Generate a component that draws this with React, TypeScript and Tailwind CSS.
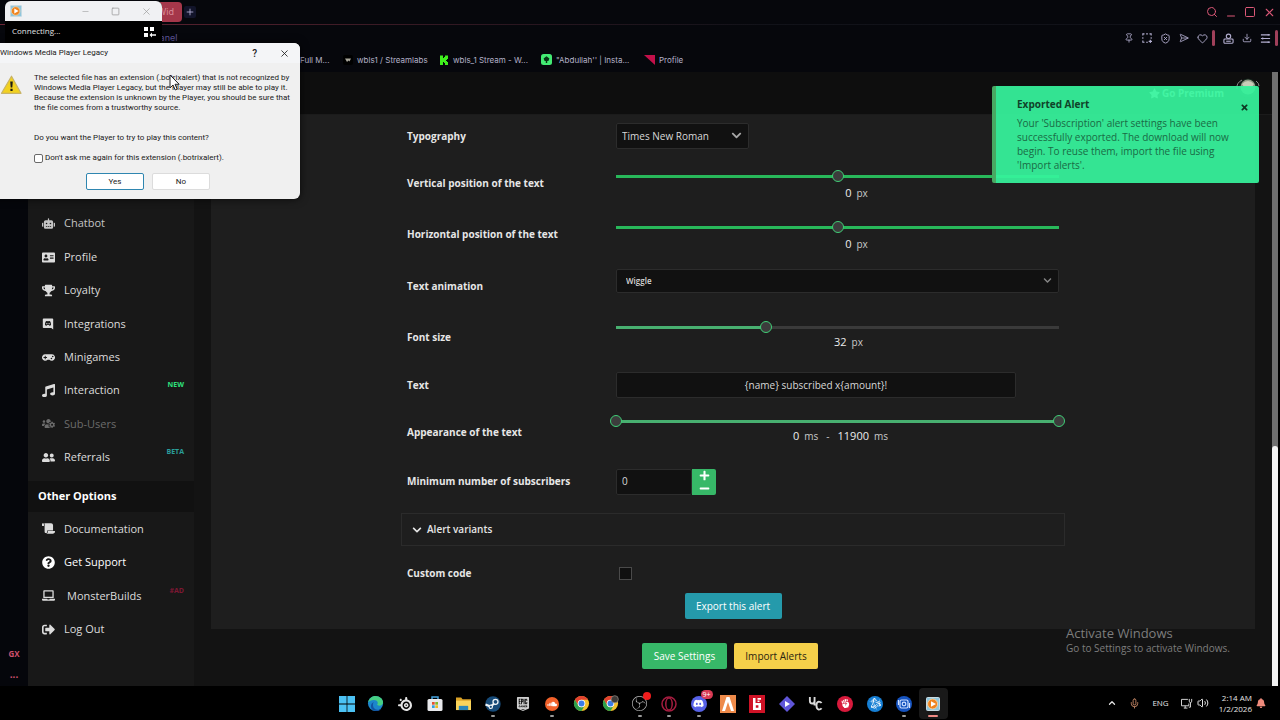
import type { ReactNode } from "react";
import {
  FaRobot, FaAddressCard, FaTrophy, FaGamepad, FaMusic, FaUsersCog, FaUserFriends, FaScroll,
  FaQuestionCircle, FaLaptop, FaSignOutAlt, FaStar, FaSteam, FaSoundcloud, FaDiscord, FaBell,
  FaPlus, FaMinus, FaFistRaised, FaBattleNet, FaTimes, FaChevronDown,
} from "react-icons/fa";
import { SiSteelseries, SiEpicgames, SiObsstudio } from "react-icons/si";
import {
  Search, Minus, Square, X, Pin, ShieldX, SendHorizontal, Heart, Download,
  ChevronUp, Mic, Volume2, Plus,
} from "lucide-react";

const ui = "font-['Open_Sans','Noto_Sans',sans-serif]";

function DiscordTile() {
  return (
    <svg viewBox="0 0 14 15" className="h-3 w-3" fill="currentColor" aria-hidden="true">
      <path
        fillRule="evenodd"
        d="M1.5 0.5h11a1 1 0 0 1 1 1V14.5l-2.4-2H1.5a1 1 0 0 1-1-1v-10a1 1 0 0 1 1-1zM4.4 4.2C3.6 5.3 3.2 6.8 3.2 8.6c.6.7 1.3 1 2.1 1l.5-.8h2.4l.5.8c.8 0 1.5-.3 2.1-1 0-1.8-.4-3.3-1.2-4.4-.6-.4-1.2-.5-1.7-.5l-.3.4H6.4l-.3-.4c-.5 0-1.1.1-1.7.5zM5.6 6.3a.8.8 0 1 1 0 1.6.8.8 0 0 1 0-1.6zm2.8 0a.8.8 0 1 1 0 1.6.8.8 0 0 1 0-1.6z"
      />
    </svg>
  );
}

type NavItem = { label: string; icon: ReactNode; badge?: string; badgeClass?: string; tone?: string };

const mainNav: NavItem[] = [
  { label: "Chatbot", icon: <FaRobot />, tone: "text-[#c4c4c4]" },
  { label: "Profile", icon: <FaAddressCard /> },
  { label: "Loyalty", icon: <FaTrophy /> },
  { label: "Integrations", icon: <DiscordTile /> },
  { label: "Minigames", icon: <FaGamepad /> },
  { label: "Interaction", icon: <FaMusic />, badge: "NEW", badgeClass: "text-[#2fe07c]" },
  { label: "Sub-Users", icon: <FaUsersCog />, tone: "text-[#6c6c6c]" },
  { label: "Referrals", icon: <FaUserFriends />, badge: "BETA", badgeClass: "text-[#2a9d9a]" },
];

const otherNav: NavItem[] = [
  { label: "Documentation", icon: <FaScroll /> },
  { label: "Get Support", icon: <FaQuestionCircle />, tone: "text-white" },
  { label: "MonsterBuilds", icon: <FaLaptop />, badge: "#AD", badgeClass: "text-[#7c1733]" },
  { label: "Log Out", icon: <FaSignOutAlt /> },
];

function NavList({ items }: { items: NavItem[] }) {
  return (
    <>
      {items.map((item) => (
        <li key={item.label} className="flex flex-1">
          <a href="#" className={`flex flex-1 items-center pl-3 pr-2.5 text-[11px] ${item.tone ?? "text-[#dcdcdc]"}`}>
            <span className="flex w-4 justify-center text-[13px]">{item.icon}</span>
            <span className={item.label === "MonsterBuilds" ? "ml-[11px]" : "ml-2"}>{item.label}</span>
            {item.badge && (
              <span className={`mb-2.5 ml-auto text-[7px] font-bold ${item.badgeClass}`}>{item.badge}</span>
            )}
          </a>
        </li>
      ))}
    </>
  );
}

function BrowserChrome() {
  return (
    <header className="flex flex-col bg-[#06070c] font-['Inter',sans-serif]">
      <div className="flex h-6 items-center pl-[120px] pr-1">
        <div className="flex h-5 w-[62px] items-center justify-end rounded-sm bg-[#a5374a] px-2 text-[9px] text-[#d98a97]">Wid</div>
        <button aria-label="New tab" className="ml-0.5 flex size-3 items-center justify-center rounded-xs bg-[#12142a] text-[#b9b4dc]">
          <Plus size={10} />
        </button>
        <div className="ml-auto flex items-center gap-[7px] text-[#dc5877]">
          <button aria-label="Search"><Search size={12} /></button>
          <button aria-label="Minimize"><Minus size={12} className="translate-y-1" /></button>
          <button aria-label="Maximize"><Square size={12} /></button>
          <button aria-label="Close window"><X size={13} /></button>
        </div>
      </div>
      <div className="h-px bg-linear-to-r from-[#6b2434] via-[#2a1620] via-40% to-[#111219] to-60%" />
      <div className="flex h-[26px] items-center pl-[154px] pr-0.5 text-[#b3aed0]">
        <span className="text-[9px] text-[#6259a0]">panel</span>
        <div className="ml-auto flex items-center gap-2">
          <button aria-label="Pin"><Pin size={10} /></button>
          <button aria-label="Snapshot">
            <svg viewBox="0 0 12 12" className="size-2.5" fill="none" stroke="currentColor" strokeWidth="1.300">
              <path d="M1 3V1h2M5 1h2M9 1h2v2M11 5v2M1 5v2M1 9v2h2M5 11h2M8 10h4M10 8v4" />
            </svg>
          </button>
          <button aria-label="Ad blocker"><ShieldX size={11} /></button>
          <button aria-label="Send"><SendHorizontal size={10} /></button>
          <button aria-label="Favourite"><Heart size={11} /></button>
          <span className="-mx-1 h-4 w-[3px] rounded-full bg-[#a0405a]" />
          <button aria-label="Account" className="ml-1">
            <svg viewBox="0 0 12 12" className="size-[11px]" fill="none" stroke="currentColor" strokeWidth="1.200">
              <circle cx="6" cy="3.600" r="2.400" />
              <rect x="1" y="6.600" width="10" height="4.600" rx="1" />
              <path d="M3.500 9h5" />
            </svg>
          </button>
          <button aria-label="Downloads"><Download size={10} /></button>
          <button aria-label="Easy setup">
            <svg viewBox="0 0 12 12" className="size-[11px]" fill="none" stroke="currentColor" strokeWidth="1.200">
              <path d="M1 2h10M1 6h10M1 10h10M9 1v2M3 5v2M9 9v2" />
            </svg>
          </button>
          <span className="-ml-1 h-4 w-[3px] rounded-full bg-[#a0405a]" />
        </div>
      </div>
      <nav className="flex h-[21px] items-center pb-1 pl-[300px] text-[8px] text-[#b4b2c8]">
        <a href="#" className="w-[43px]">Full M...</a>
        <a href="#" className="flex w-[96px] items-center gap-1">
          <svg viewBox="0 0 10 10" className="size-2.5">
            <rect width="10" height="10" rx="2" fill="#000" />
            <path d="M2 3.500h6L6.500 6.500 5.500 5.500 4 7z" fill="#a9a79c" />
          </svg>
          wbls1 / Streamlabs
        </a>
        <a href="#" className="flex w-[102px] items-center gap-1">
          <svg viewBox="0 0 10 10" className="size-2.5">
            <path d="M1 0.500h3v2.500h1V2h1V0.500h3V4H8v1H7v1h1v1h1v3H6V8H5V7H4v3H1z" fill="#3fef1d" />
          </svg>
          wbls_1 Stream - W...
        </a>
        <a href="#" className="flex w-[103px] items-center gap-1">
          <svg viewBox="0 0 11 11" className="size-[11px]">
            <rect width="11" height="11" rx="2.500" fill="#43ea73" />
            <path d="M5.500 2.200L8.400 4.600 7.400 7H6.200v2H4.800V7H3.600L2.600 4.600z" fill="#073215" />
          </svg>
          "Abdullah'' | Insta...
        </a>
        <a href="#" className="flex items-center gap-1">
          <svg viewBox="0 0 11 11" className="size-[11px]"><path d="M0 1h11v10z" fill="#c3104a" /></svg>
          Profile
        </a>
      </nav>
    </header>
  );
}

const thumb =
  "[&::-webkit-slider-thumb]:appearance-none [&::-webkit-slider-thumb]:size-3 [&::-webkit-slider-thumb]:rounded-full [&::-webkit-slider-thumb]:border [&::-webkit-slider-thumb]:border-solid [&::-webkit-slider-thumb]:border-[#3fcf76] [&::-webkit-slider-thumb]:bg-[#3c3c3c]";
const range =
  "m-0 block h-3.5 w-full cursor-pointer appearance-none bg-transparent bg-[length:100%_3px] bg-center bg-no-repeat";

function Row({ label, htmlFor, height, children }: { label: string; htmlFor: string; height: string; children: ReactNode }) {
  return (
    <div className={`flex px-1.5 ${height}`}>
      <label htmlFor={htmlFor} className="flex w-[209px] shrink-0 items-center text-[10px] font-bold text-[#e6e6e6]">{label}</label>
      <div className="flex min-w-0 flex-1 flex-col">{children}</div>
    </div>
  );
}

function Unit({ value, unit }: { value: string; unit: string }) {
  return (
    <span className="flex items-baseline gap-[5px]">
      <span className="text-[11px] text-[#ececec]">{value}</span>
      <span className="text-[10px] text-[#c9c9c9]">{unit}</span>
    </span>
  );
}

function AlertForm() {
  const value = "flex items-center justify-center";
  const field = "rounded-xs border border-[#2c2c2c] bg-[#111111] text-[#d8d8d8]";
  const chevron = "pointer-events-none absolute right-[7px] top-[7px]";
  return (
    <form className="mx-auto w-full max-w-[664px]">
      <Row label="Typography" htmlFor="typography" height="h-[43px]">
        <div className="relative mt-2 w-[133px]">
          <select id="typography" className={`block h-[26px] w-full appearance-none pl-[5px] text-[10px] ${field}`}>
            <option>Times New Roman</option>
          </select>
          <FaChevronDown size={11} className={`${chevron} text-[#a8a8a8]`} />
        </div>
      </Row>
      <Row label="Vertical position of the text" htmlFor="vertical" height="h-[51px]">
        <input id="vertical" type="range" min="-100" max="100" defaultValue="0" className={`mt-[11px] bg-linear-to-r from-[#28b85a] to-[#28b85a] ${range} ${thumb}`} />
        <div className={`h-5 pl-[38px] ${value}`}><Unit value="0" unit="px" /></div>
      </Row>
      <Row label="Horizontal position of the text" htmlFor="horizontal" height="h-[51px]">
        <input id="horizontal" type="range" min="-100" max="100" defaultValue="0" className={`mt-[11px] bg-linear-to-r from-[#28b85a] to-[#28b85a] ${range} ${thumb}`} />
        <div className={`h-5 pl-[38px] ${value}`}><Unit value="0" unit="px" /></div>
      </Row>
      <Row label="Text animation" htmlFor="animation" height="h-[52px]">
        <div className="relative mt-[9px]">
          <select id="animation" className={`block h-6 w-full appearance-none pl-[9px] text-[8px] font-semibold ${field}`}>
            <option>Wiggle</option>
          </select>
          <FaChevronDown size={9} className={`${chevron} text-[#858585]`} />
        </div>
      </Row>
      <Row label="Font size" htmlFor="font-size" height="h-[51px]">
        <input id="font-size" type="range" min="0" max="96" defaultValue="32" className={`mt-2 bg-linear-to-r from-[#48b070] from-34% to-[#3a3a3a] to-34% ${range} ${thumb}`} />
        <div className={`h-4 pl-[22px] ${value}`}><Unit value="32" unit="px" /></div>
      </Row>
      <Row label="Text" htmlFor="alert-text" height="h-11">
        <input id="alert-text" type="text" defaultValue="{name} subscribed x{amount}!" className={`my-auto h-[26px] w-[400px] text-center text-[10px] ${field}`} />
      </Row>
      <Row label="Appearance of the text" htmlFor="appear-from" height="h-[50px]">
        <div className="-mx-1.5 mt-[7px] grid bg-linear-to-r from-[#48b070] to-[#48b070] bg-[length:440px_3px] bg-center bg-no-repeat">
          <input id="appear-from" type="range" min="0" max="11900" defaultValue="0" className={`col-start-1 row-start-1 ${range} ${thumb}`} />
          <input aria-label="Appearance end" type="range" min="0" max="11900" defaultValue="11900" className={`col-start-1 row-start-1 ${range} ${thumb}`} />
        </div>
        <div className={`h-4 gap-2 pl-1.5 ${value}`}>
          <Unit value="0" unit="ms" />
          <span className="text-[10px] text-[#c9c9c9]">-</span>
          <Unit value="11900" unit="ms" />
        </div>
      </Row>
      <Row label="Minimum number of subscribers" htmlFor="min-subs" height="h-[49px]">
        <div className="my-auto flex h-[26px]">
          <input id="min-subs" type="text" defaultValue="0" className={`w-[76px] pl-[5px] text-[10px] ${field}`} />
          <div className="flex w-6 flex-col rounded-r-xs bg-[#37b868] text-white">
            <button type="button" aria-label="Increase" className="flex flex-1 items-center justify-center"><FaPlus size={11} /></button>
            <button type="button" aria-label="Decrease" className="flex flex-1 items-center justify-center"><FaMinus size={11} /></button>
          </div>
        </div>
      </Row>
      <button type="button" className="mt-[7px] flex h-[33px] w-full items-center gap-[5px] border border-[#2b2b2b] px-2.5 text-[10px] font-semibold text-[#e6e6e6]">
        <FaChevronDown size={10} />
        Alert variants
      </button>
      <div className="mt-[7px]">
        <Row label="Custom code" htmlFor="custom-code" height="h-10">
          <input id="custom-code" type="checkbox" className="my-auto ml-[3px] size-[13px] appearance-none border border-[#4a4a4a] bg-[#101010]" />
        </Row>
      </div>
      <div className="flex justify-center">
        <button type="button" className="h-[26px] w-[97px] rounded-xs bg-[#259aab] text-[10px] text-white">Export this alert</button>
      </div>
    </form>
  );
}

function MediaIcon({ className }: { className: string }) {
  return (
    <svg viewBox="0 0 14 14" className={className} aria-hidden="true">
      <rect x="0.500" y="0.500" width="13" height="13" rx="1" fill="#8fc6dd" stroke="#c7dbe3" />
      <circle cx="6.600" cy="7" r="5" fill="#ef8420" stroke="#fbd9ac" strokeWidth="0.800" />
      <path d="M5 4.200L10 7 5 9.800z" fill="#fff" />
    </svg>
  );
}

function PlayerWindow() {
  return (
    <section className="absolute left-[5px] top-px w-[157px] overflow-hidden rounded-t-md bg-black">
      <div className="flex h-5 items-center bg-[#f0f1f3] pl-[5px] pr-2.5 text-[#9a9a9a]">
        <MediaIcon className="size-3" />
        <div className="ml-auto flex items-center gap-[21px]">
          <button aria-label="Minimize player"><Minus size={9} strokeWidth={1.5} /></button>
          <button aria-label="Maximize player"><Square size={9} strokeWidth={2} /></button>
          <button aria-label="Close player"><X size={11} strokeWidth={1.5} /></button>
        </div>
      </div>
      <div className="flex h-10 items-start justify-between pl-[7px] pr-1.5 pt-1 text-[8px] text-[#e2e2e2]">
        <span>Connecting...</span>
        <svg viewBox="0 0 12 12" className="mt-px size-3" fill="#fff" aria-hidden="true">
          <path d="M0 1h4v4H0zM6 1h4v4H6zM0 7h4v4H0zM5.500 9L8 6.500V8.300h4v1.400H8v1.800z" />
        </svg>
      </div>
    </section>
  );
}

function ExtensionDialog() {
  const btn = "h-[17px] w-[58px] rounded-xs border bg-white text-[8px] text-[#1a1a1a]";
  return (
    <section role="dialog" aria-label="Windows Media Player Legacy" className="absolute -left-2 top-[43px] w-[308px] rounded-md bg-[#f0f0f0] font-['Roboto',sans-serif] text-[8px] text-[#1a1a1a] shadow-[0_0_8px_rgba(0,0,0,0.7)]">
      <div className="flex h-5 items-center rounded-t-md bg-[#f4f5f7] pl-2 pr-2.5">
        <h2>Windows Media Player Legacy</h2>
        <button aria-label="Help" className="ml-auto text-[10px] font-medium">?</button>
        <button aria-label="Close dialog" className="ml-[22px]"><X size={11} strokeWidth={1.8} /></button>
      </div>
      <div className="flex pb-[9px] pl-2 pt-2.5">
        <svg viewBox="0 0 22 20" className="mt-0.5 h-5 w-[22px] shrink-0" aria-hidden="true">
          <path d="M11.500 1.200L21 18.300H1.500z" fill="#f2d11f" stroke="#c9b466" strokeWidth="1.200" strokeLinejoin="round" />
          <path d="M10.200 6.500h2.600l-.5 6h-1.600zM10.400 13.800h2.200v2.200h-2.200z" fill="#1e1c12" />
        </svg>
        <div className="ml-3 flex-1">
          <p className="leading-[10px] whitespace-nowrap">
            The selected file has an extension (.botrixalert) that is not recognized by<br />
            Windows Media Player Legacy, but the Player may still be able to play it.<br />
            Because the extension is unknown by the Player, you should be sure that<br />
            the file comes from a trustworthy source.
          </p>
          <p className="mt-5 leading-[10px]">Do you want the Player to try to play this content?</p>
          <label className="mt-2.5 flex h-2.5 items-center gap-0.5">
            <input type="checkbox" className="size-[9px] appearance-none rounded-xs border border-[#6a6a6a] bg-white" />
            Don't ask me again for this extension (.botrixalert).
          </label>
          <div className="ml-13 mt-2.5 flex gap-2">
            <button className={`${btn} border-[#2f86b0]`}>Yes</button>
            <button className={`${btn} border-[#dcdcdc]`}>No</button>
          </div>
        </div>
      </div>
    </section>
  );
}

function Toast() {
  return (
    <aside role="status" className="absolute right-[21px] top-[86px] flex w-[267px] rounded-xs border-l-4 border-[#48a862] bg-[#36f39c]/93 pb-[11px] pl-[21px] pr-2.5 pt-[11px] text-[10px] text-[#1a6b45]">
      <div className="flex-1">
        <h2 className="leading-[15px] font-bold text-[#0f4229]">Exported Alert</h2>
        <p className="mt-1 leading-[14px] whitespace-nowrap">
          Your 'Subscription' alert settings have been<br />
          successfully exported. The download will now<br />
          begin. To reuse them, import the file using<br />
          'Import alerts'.
        </p>
      </div>
      <button aria-label="Dismiss" className="mt-1.5 self-start text-[#0e3a24]"><FaTimes size={9} /></button>
    </aside>
  );
}

function ChromeLogo({ avatar = false }: { avatar?: boolean }) {
  return (
    <svg viewBox="0 0 18 18" className="size-[17px]" aria-hidden="true">
      <circle cx="9" cy="9" r="8" fill="#f3c12d" />
      <path d="M2.070 5A8 8 0 0 1 15.930 5H9a4 4 0 0 0-3.460 6z" fill="#e2412f" />
      <path d="M2.070 5A8 8 0 0 0 9 17l3.460-6A4 4 0 0 1 5.540 11z" fill="#2da14c" />
      <circle cx="9" cy="9" r="4" fill="#fff" />
      <circle cx="9" cy="9" r="3.100" fill="#3b7de8" />
      {avatar && <circle cx="13.500" cy="4.500" r="3.800" fill="#3d3a38" stroke="#8d8984" strokeWidth="0.800" />}
    </svg>
  );
}

type TaskIcon = { name: string; node: ReactNode; running?: string };

const tasks: TaskIcon[] = [
  { name: "Start", node: <svg viewBox="0 0 16 16" className="size-4"><path d="M0 0h7.600v7.600H0zM8.400 0H16v7.600H8.400zM0 8.400h7.600V16H0zM8.400 8.400H16V16H8.400z" fill="#4cc2f4" /></svg> },
  {
    name: "Edge",
    node: (
      <svg viewBox="0 0 18 18" className="size-[17px]">
        <circle cx="9" cy="9" r="8" fill="#1b86cc" />
        <path d="M1.200 8C2 3.500 5.200 1 9 1c4.600 0 8 3.200 8 6.600 0 2.200-1.600 3.700-3.800 3.700-1.500 0-2.400-.6-2.400-1.200 0-.5.600-.7.600-1.700C11.400 6.700 9.600 5.400 7.200 5.400 4.600 5.400 2.200 6.600 1.200 8z" fill="#46cf84" />
        <path d="M6.300 10.500c0 3.200 2.600 5.200 5.600 5.200 1.600 0 2.800-.4 3.800-1.200C14.300 16.300 11.800 17 9.500 17 6 17 4.200 14.500 4.200 12c0-2.200 1.300-4 3-4.600-.6.800-.9 1.900-.9 3.100z" fill="#1253a2" />
      </svg>
    ),
  },
  { name: "SteelSeries", node: <SiSteelseries size={14} className="text-[#e5e5e5]" /> },
  {
    name: "Store",
    node: (
      <svg viewBox="0 0 16 17" className="h-[17px] w-4">
        <path d="M5 5V2h6v3" fill="none" stroke="#45a4e0" strokeWidth="1.500" />
        <rect x="0.500" y="4" width="15" height="12" rx="1.500" fill="#e8e9ec" />
        <path d="M5 7h2.700v2.700H5z" fill="#e5512f" /><path d="M8.300 7H11v2.700H8.300z" fill="#7fb928" />
        <path d="M5 10.300h2.700V13H5z" fill="#2f9fe0" /><path d="M8.300 10.300H11V13H8.300z" fill="#f2b91d" />
      </svg>
    ),
  },
  {
    name: "File Explorer",
    node: (
      <svg viewBox="0 0 18 16" className="h-[15px] w-[17px]">
        <path d="M1 1.500h5.500l1.500 2h9V14H1z" fill="#dca327" />
        <path d="M1 5h16v10H1z" fill="#f9d45a" /><path d="M4 15v-4.500h10V15z" fill="#2b87b8" />
      </svg>
    ),
  },
  {
    name: "Steam",
    node: (
      <svg viewBox="0 0 16 16" className="size-4">
        <circle cx="8" cy="8" r="7.700" fill="#164a78" />
        <path d="M0.500 8.500l5 2 4.500-3.500" stroke="#eef3f7" strokeWidth="2.200" fill="none" />
        <circle cx="10.500" cy="5.800" r="2.500" fill="#164a78" stroke="#eef3f7" strokeWidth="1.300" />
        <circle cx="5.800" cy="10.800" r="1.700" fill="#164a78" stroke="#eef3f7" strokeWidth="1.100" />
      </svg>
    ),
    running: "bg-[#9a9a9a]",
  },
  { name: "Epic Games", node: <SiEpicgames size={14} className="text-[#cfcfcf]" /> },
  { name: "SoundCloud", node: <span className="flex size-3.5 items-center justify-center rounded-full bg-[#f2612a] text-white"><FaSoundcloud size={10} /></span>, running: "bg-[#9a9a9a]" },
  { name: "Chrome", node: <ChromeLogo /> },
  { name: "Chrome profile", node: <ChromeLogo avatar /> },
  {
    name: "OBS",
    node: (
      <span className="relative">
        <SiObsstudio size={15} className="text-[#b8b8b8]" />
        <span className="absolute -right-1 -top-1 size-2 rounded-full bg-[#f01d1d]" />
      </span>
    ),
    running: "bg-[#9a9a9a]",
  },
  {
    name: "Opera GX",
    node: (
      <svg viewBox="0 0 16 16" className="size-4" fill="none" stroke="#a51c3f">
        <circle cx="8" cy="8" r="7" strokeWidth="1.500" /><ellipse cx="8" cy="8" rx="3.200" ry="6" strokeWidth="1.500" />
      </svg>
    ),
    running: "bg-[#9a9a9a]",
  },
  {
    name: "Discord",
    node: (
      <span className="relative flex size-4 items-center justify-center rounded-full bg-[#5661e6] text-white">
        <FaDiscord size={11} />
        <span className="absolute -right-1.5 -top-1.5 rounded-full bg-[#d93a55] px-0.5 text-[7px] leading-[9px]">9+</span>
      </span>
    ),
    running: "bg-[#9a9a9a]",
  },
  { name: "FiveM", node: <svg viewBox="0 0 16 18" className="h-[18px] w-4"><rect width="16" height="18" fill="#ee8a4a" /><path d="M6.500 2h3L14 16h-3L8 7l-3 9H2z" fill="#fff" /></svg> },
  { name: "Rockstar", node: <svg viewBox="0 0 16 18" className="h-[18px] w-4"><rect width="16" height="18" fill="#cf1226" /><path fillRule="evenodd" d="M4 3h2.500v5H12v7H4zM6.800 10.300v2.400h2.600v-2.400zM8.500 3H12v1.800H8.500zM8.500 5.500h2V7h-2z" fill="#fff" /></svg> },
  { name: "Clip player", node: <svg viewBox="0 0 16 16" className="size-4"><path d="M8 0l8 8-8 8-8-8z" fill="#5f55d8" /><path d="M6 5l5 3-5 3z" fill="#fff" /></svg> },
  {
    name: "Uncut",
    node: (
      <svg viewBox="0 0 16 16" className="size-[15px]" fill="none" stroke="#d9d9d9" strokeWidth="2">
        <path d="M2 1v4q0 3 2.500 3T7 5V1M7 4v6M14.500 7.500Q13.500 6 11.500 6 9 6.500 9 10t2.500 4.500q2 0 3-1.500" />
      </svg>
    ),
  },
  { name: "Riot", node: <span className="flex size-4 items-center justify-center rounded-full bg-[#d81a3c] text-white"><FaFistRaised size={9} className="-rotate-12" /></span> },
  { name: "Battle.net", node: <span className="flex size-4 items-center justify-center rounded-full bg-[#167fd4] text-white"><FaBattleNet size={12} /></span> },
  {
    name: "Browser hub",
    node: (
      <svg viewBox="0 0 16 16" className="size-4" fill="none" stroke="#cfe0ff" strokeWidth="1.200">
        <circle cx="8" cy="8" r="8" fill="#1553c0" stroke="none" />
        <rect x="4" y="4" width="8" height="8" rx="1.500" /><circle cx="8" cy="8" r="1.800" /><path d="M2.500 9V4M13.500 7v5" />
      </svg>
    ),
    running: "bg-[#9a9a9a]",
  },
  { name: "Media Player", node: <MediaIcon className="size-3.5" />, running: "bg-[#f08a84]" },
];

function Taskbar() {
  return (
    <footer className="grid h-[34px] grid-cols-[1fr_616px_1fr] items-center bg-black">
      <span />
      <div className="flex h-full pb-px pt-0.5">
        {tasks.map((task) => (
          <button
            key={task.name}
            aria-label={task.name}
            className={`relative flex flex-1 items-center justify-center rounded-sm ${task.name === "Media Player" ? "bg-[#191919]" : ""}`}
          >
            {task.node}
            {task.running && <span className={`absolute bottom-0.5 left-1/2 h-0.5 -translate-x-1/2 rounded-full ${task.name === "Media Player" ? "w-2.5" : "w-1"} ${task.running}`} />}
          </button>
        ))}
      </div>
      <div className="flex items-center justify-end pr-3.5 text-[8px] text-[#e4e4e4]">
        <ChevronUp size={10} strokeWidth={3} />
        <Mic size={11} className="ml-3 text-[#c98a68]" />
        <span className="ml-3">ENG</span>
        <svg viewBox="0 0 13 12" className="ml-3 h-[11px] w-3" fill="none" stroke="currentColor" aria-hidden="true">
          <path d="M7.500 1.500h-7v7h8V6M3 11h4M4.500 8.500V11M9 1v2.500q0 1.500 1.300 1.500t1.300-1.500V1M10.300 5v5H8.500" />
        </svg>
        <Volume2 size={12} className="ml-1" />
        <span className="ml-2.5 text-right leading-[11px]">2:14 AM<br />1/2/2026</span>
        <FaBell size={10} className="ml-1 text-[#ef8b7c]" />
      </div>
    </footer>
  );
}

export default function App() {
  return (
    <div className={`relative flex min-h-screen flex-col overflow-hidden bg-black ${ui}`}>
      <BrowserChrome />
      <div className="flex flex-1">
        <aside className="flex w-7 flex-col items-center justify-end gap-2 bg-[#05060b] pb-1.5 text-[#d0506e]">
          <span className="text-[8px] font-bold">GX</span>
          <span className="text-[10px] leading-3 font-bold">...</span>
        </aside>
        <nav className="flex w-[166px] flex-col bg-[#181818] pt-[135px]">
          <ul className="flex h-[267px] flex-col"><NavList items={mainNav} /></ul>
          <h2 className="mt-[7px] flex h-[31px] items-center bg-[#111111] pl-2.5 text-[11px] font-bold text-white">Other Options</h2>
          <ul className="flex h-[134px] flex-col"><NavList items={otherNav} /></ul>
        </nav>
        <main className="flex min-w-0 flex-1 flex-col bg-[#131313]">
          <div className="flex h-[43px] items-start justify-end border-b border-[#1b1b1b] bg-[#0e0e0e] pr-3 pt-1.5">
            <a href="#" className="mr-3 mt-2 flex items-center gap-0.5 text-[10px] font-bold text-[#eafff3]"><FaStar size={11} />Go Premium</a>
            <svg viewBox="0 0 24 20" className="h-5 w-6" aria-hidden="true">
              <circle cx="12" cy="10" r="9.500" fill="#14231b" />
              <circle cx="12" cy="9" r="7.500" fill="#8f9a86" />
              <path d="M6 6q6-6 12 0l-2 3H8z" fill="#c9ccb8" />
              <path d="M1 11q-1-6 5-9M23 8q0-3-3-5" stroke="#8a8a8a" fill="none" />
            </svg>
          </div>
          <section className="ml-[17px] mr-[17px] bg-[#1e1e1e] pb-2.5">
            <AlertForm />
          </section>
          <div className="flex justify-center gap-[7px] pb-[17px] pr-1.5 pt-3.5">
            <button className="h-[26px] w-[85px] rounded-xs bg-[#37b868] text-[10px] text-white">Save Settings</button>
            <button className="h-[26px] w-[84px] rounded-xs bg-[#f5d04a] text-[10px] text-[#2b2410]">Import Alerts</button>
          </div>
        </main>
        <div className="mr-0.5 flex w-1.5 flex-col bg-[#707070]">
          <span className="mt-auto h-[240px] rounded-t-full bg-[#f2f2f2]" />
        </div>
      </div>
      <Taskbar />
      <Toast />
      <div className="pointer-events-none absolute bottom-[65px] left-[1066px] whitespace-nowrap text-[#7d7d7d]">
        <p className="text-[13px] leading-4">Activate Windows</p>
        <p className="text-[10px] leading-[14px]">Go to Settings to activate Windows.</p>
      </div>
      <PlayerWindow />
      <ExtensionDialog />
      <svg viewBox="0 0 12 18" className="pointer-events-none absolute left-[169px] top-[74px] h-[18px] w-3" aria-hidden="true">
        <path d="M1 1v13l3-3 2.200 5 2-1-2.200-4.700h4.200z" fill="#fff" stroke="#222" />
      </svg>
    </div>
  );
}
